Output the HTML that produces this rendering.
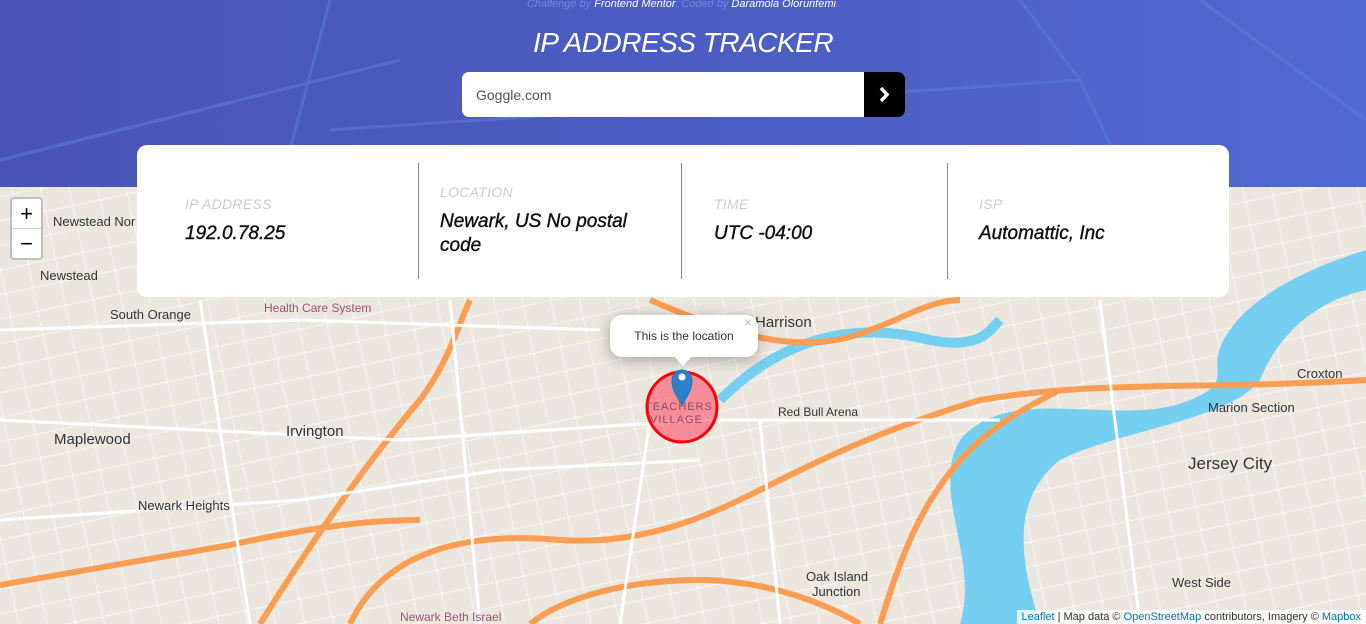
<!DOCTYPE html>
<html><head><meta charset="utf-8"><style>
*{margin:0;padding:0;box-sizing:border-box}
html,body{width:1366px;height:624px;overflow:hidden}
body{font-family:"Liberation Sans",sans-serif;position:relative;background:#ebe7df}
.hdr{position:absolute;left:0;top:0;width:1366px;height:187px;background:linear-gradient(90deg,#4a54b6,#4c5cc3 50%,#5169d2);overflow:hidden}
.credit{position:absolute;top:-2px;width:100%;text-align:center;font-size:11px;font-style:italic;color:#6f8ae0}
.credit b{color:#fff;font-weight:normal}
h1{position:absolute;top:27px;width:100%;text-align:center;color:#fff;font-size:28px;font-style:italic;font-weight:normal;letter-spacing:-0.5px}
.search{position:absolute;left:462px;top:72px;width:443px;height:45px;background:#fff;border-radius:7px;overflow:hidden}
.search span{position:absolute;left:14px;top:15px;font-size:14px;color:#555}
.btn{position:absolute;right:0;top:0;width:41px;height:45px;background:#000}
.card{position:absolute;left:137px;top:145px;width:1092px;height:152px;background:#fff;border-radius:10px;z-index:5}
.col{position:absolute;top:18px;height:116px}
.sep{position:absolute;top:18px;width:1px;height:116px;background:#888}
.lab{font-size:14px;color:#ccc;font-style:italic;letter-spacing:.3px}
.val{font-size:19px;color:#111;font-style:italic;margin-top:10px;line-height:24px;-webkit-text-stroke:.4px #111}
.map{position:absolute;left:0;top:187px;width:1366px;height:437px;overflow:hidden}
.zoom{position:absolute;left:10px;top:197px;width:33px;height:63px;background:#fff;border:2px solid rgba(0,0,0,.25);border-radius:4px;z-index:6}
.zoom div{height:30px;text-align:center;font-size:22px;line-height:30px;color:#000}
.lbl{position:absolute;font-size:13px;color:#333}
.attr{position:absolute;right:0;bottom:0;background:rgba(255,255,255,.8);font-size:11px;padding:1px 5px;color:#333}
.attr a{color:#0078a8}
.pop{position:absolute;left:610px;top:315px;width:148px;height:42px;background:#fff;border-radius:12px;font-size:12px;color:#333;text-align:center;line-height:42px;box-shadow:0 3px 14px rgba(0,0,0,.3)}
</style></head><body>
<div class="map"><svg width="1366" height="437" viewBox="0 187 1366 437">
<defs><pattern id="g" width="28" height="24" patternUnits="userSpaceOnUse" patternTransform="rotate(-12)"><path d="M0 0 H28 M0 0 V24" stroke="#fff" stroke-width="1.5" fill="none"/></pattern></defs>
<rect x="0" y="187" width="1366" height="437" fill="#ebe7df"/>
<rect x="0" y="187" width="1366" height="437" fill="url(#g)" opacity=".8"/>
<path d="M1366 250 C1300 270 1250 300 1230 330 C1200 370 1240 380 1190 400 C1120 430 1010 380 960 440 C930 490 980 560 960 624 L1040 624 C1020 560 1010 500 1060 460 C1120 430 1230 420 1260 380 C1280 330 1320 300 1366 290Z" fill="#75cff0"/>
<path d="M720 400 C780 340 850 320 930 340 C980 350 990 330 1000 320" stroke="#75cff0" stroke-width="10" fill="none"/>
<g stroke="#fb9d52" stroke-width="6" fill="none">
<path d="M350 624 C380 560 450 530 560 540 C640 545 700 520 760 490 C820 460 880 430 980 400 C1100 380 1200 390 1366 380"/>
<path d="M260 624 C300 560 360 470 420 400 C450 360 460 320 470 300"/>
<path d="M650 300 C720 330 800 360 870 330 C900 320 930 300 960 300"/>
<path d="M880 624 C900 560 920 500 970 450 C1000 420 1040 400 1060 390"/>
<path d="M0 585 C60 575 140 560 230 545 C300 530 360 520 420 520"/>
<path d="M530 624 C560 600 620 580 700 580 C760 580 820 600 860 624"/>
</g>
<g stroke="#fff" stroke-width="3" fill="none">
<path d="M0 330 L300 320 L600 330"/><path d="M0 420 L400 440 L700 420 L1000 420"/><path d="M0 520 L300 500 L500 470 L700 460"/><path d="M200 300 L250 624"/><path d="M450 300 L480 624"/><path d="M650 420 L620 624"/><path d="M760 420 L780 624"/><path d="M1100 300 L1140 624"/>
</g>
<circle cx="682" cy="407" r="35" fill="rgba(255,50,80,.5)" stroke="#f00" stroke-width="3"/>
<path d="M682 405 C674 392 672 388 672 380 A10 10 0 0 1 692 380 C692 388 690 392 682 405Z" fill="#2b82cb" stroke="#2578b8"/>
<circle cx="682" cy="377" r="3.5" fill="#fff"/>
</svg></div>
<div class="lbl" style="left:53px;top:214px">Newstead Nor</div>
<div class="lbl" style="left:40px;top:268px">Newstead</div>
<div class="lbl" style="left:110px;top:307px">South Orange</div>
<div class="lbl" style="left:264px;top:301px;color:#a05070;font-size:12px">Health Care System</div>
<div class="lbl" style="left:54px;top:431px;font-size:15px">Maplewood</div>
<div class="lbl" style="left:286px;top:423px;font-size:15px">Irvington</div>
<div class="lbl" style="left:138px;top:498px">Newark Heights</div>
<div class="lbl" style="left:755px;top:314px;font-size:15px">Harrison</div>
<div class="lbl" style="left:778px;top:405px;font-size:12px">Red Bull Arena</div>
<div class="lbl" style="left:1188px;top:454px;font-size:17px">Jersey City</div>
<div class="lbl" style="left:1208px;top:400px">Marion Section</div>
<div class="lbl" style="left:1297px;top:366px">Croxton</div>
<div class="lbl" style="left:806px;top:569px">Oak Island</div>
<div class="lbl" style="left:812px;top:584px">Junction</div>
<div class="lbl" style="left:1172px;top:575px">West Side</div>
<div class="lbl" style="left:400px;top:610px;color:#a05070;font-size:12px">Newark Beth Israel</div>
<div class="lbl" style="left:645px;top:401px;color:#8a4a66;font-size:11px;letter-spacing:1px">TEACHERS</div>
<div class="lbl" style="left:650px;top:414px;color:#8a4a66;font-size:11px;letter-spacing:1px">VILLAGE</div>
<div class="pop">This is the location<span style="position:absolute;right:6px;top:-14px;color:#bbb;font-size:14px">×</span></div>
<div style="position:absolute;left:674px;top:356px;width:0;height:0;border-left:9px solid transparent;border-right:9px solid transparent;border-top:10px solid #fff"></div>
<div class="zoom"><div style="border-bottom:1px solid #ccc">+</div><div>−</div></div>
<div class="attr"><a>Leaflet</a> | Map data © <a>OpenStreetMap</a> contributors, Imagery © <a>Mapbox</a></div>
<div class="hdr">
<svg width="1366" height="187" style="position:absolute;left:0;top:0" fill="none" stroke="#5a7ad8" stroke-width="3" opacity=".6"><path d="M280 187 L330 0 M330 130 L1080 80 L1020 0 M1080 80 L1130 187 M0 160 L400 60 M1200 0 L1366 120"/></svg>
<div class="credit">Challenge by <b>Frontend Mentor</b>. Coded by <b>Daramola Olorunfemi</b>.</div>
<h1>IP ADDRESS TRACKER</h1>
<div class="search"><span>Goggle.com</span><div class="btn"><svg width="41" height="45"><path d="M17 16 L23 22.5 L17 29" stroke="#fff" stroke-width="3.5" fill="none"/></svg></div></div>
</div>
<div class="card">
<div class="col" style="left:48px;top:51px"><div class="lab">IP ADDRESS</div><div class="val">192.0.78.25</div></div>
<div class="sep" style="left:281px"></div>
<div class="col" style="left:303px;top:39px;width:210px"><div class="lab">LOCATION</div><div class="val">Newark, US No postal code</div></div>
<div class="sep" style="left:544px"></div>
<div class="col" style="left:577px;top:51px"><div class="lab">TIME</div><div class="val">UTC -04:00</div></div>
<div class="sep" style="left:810px"></div>
<div class="col" style="left:842px;top:51px"><div class="lab">ISP</div><div class="val">Automattic, Inc</div></div>
</div>
</body></html>
